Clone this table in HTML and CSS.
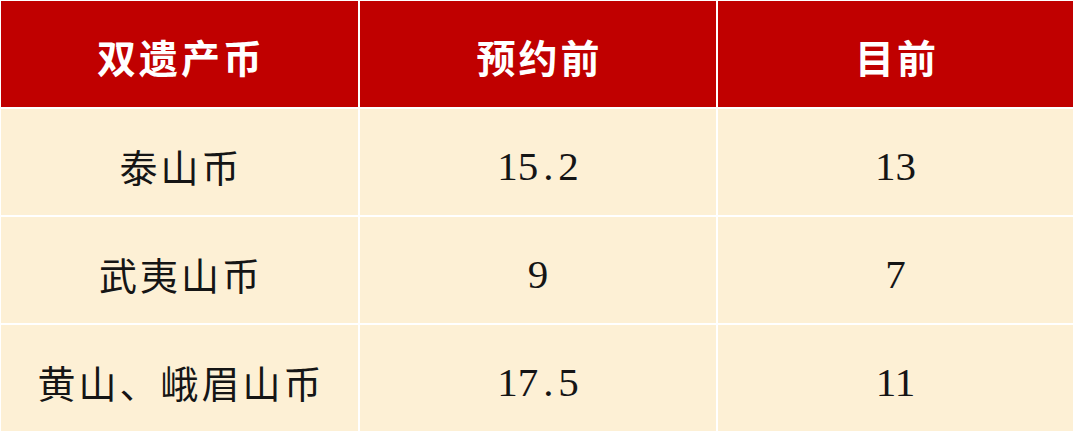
FILE: index.html
```html
<!DOCTYPE html>
<html lang="zh-CN">
<head>
<meta charset="utf-8">
<link rel="stylesheet" href="styles.css">
</head>
<body>
<div class="table">
  <div class="cell head">双遗产币</div>
  <div class="cell head">预约前</div>
  <div class="cell head">目前</div>

  <div class="cell name">泰山币</div>
  <div class="cell num">15<span class="dot">.</span>2</div>
  <div class="cell num">13</div>

  <div class="cell name">武夷山币</div>
  <div class="cell num">9</div>
  <div class="cell num">7</div>

  <div class="cell name">黄山、峨眉山币</div>
  <div class="cell num">17<span class="dot">.</span>5</div>
  <div class="cell num">11</div>
</div>
</body>
</html>
```

FILE: styles.css
```css
html, body {
  margin: 0;
  padding: 0;
  background: #ffffff;
}
body {
  width: 1076px;
  height: 434px;
  overflow: hidden;
}
.table {
  box-sizing: border-box;
  width: 1074px;
  height: 431px;
  padding: 1px 0 0 1px;
  display: grid;
  grid-template-columns: 357px 356px 355px;
  grid-template-rows: repeat(4, 1fr);
  gap: 2px;
}
.cell {
  display: flex;
  align-items: center;
  justify-content: center;
  background: #fdf0d5;
  color: #151515;
  padding-top: 6px;
  box-sizing: border-box;
}
.head {
  background: #c00000;
  color: #ffffff;
  font-family: "Noto Sans CJK SC", sans-serif;
  font-weight: 700;
  font-size: 39px;
  letter-spacing: 3px;
  padding-left: 3px;
  padding-top: 4px;
}
.name {
  font-family: "Noto Sans CJK SC", sans-serif;
  font-weight: 400;
  font-size: 38px;
  letter-spacing: 3px;
  padding-left: 3px;
}
.num {
  font-family: "Liberation Serif", serif;
  font-size: 41px;
  padding-top: 8px;
}
.dot {
  display: inline-block;
  width: 20px;
  text-align: center;
}
```
